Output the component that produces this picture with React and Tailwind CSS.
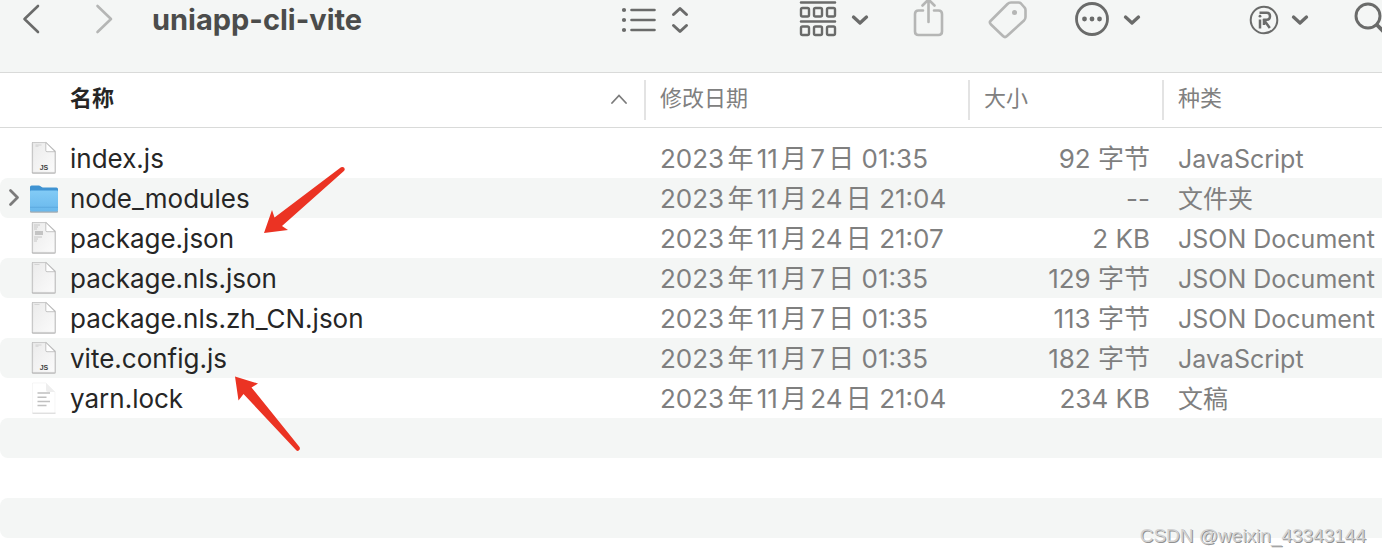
import React from 'react';

const files = [
  { name: 'index.js', icon: 'js', date: '2023年11月7日 01:35', size: '92 字节', kind: 'JavaScript' },
  { name: 'node_modules', icon: 'folder', date: '2023年11月24日 21:04', size: '--', kind: '文件夹' },
  { name: 'package.json', icon: 'preview', date: '2023年11月24日 21:07', size: '2 KB', kind: 'JSON Document' },
  { name: 'package.nls.json', icon: 'doc', date: '2023年11月7日 01:35', size: '129 字节', kind: 'JSON Document' },
  { name: 'package.nls.zh_CN.json', icon: 'doc', date: '2023年11月7日 01:35', size: '113 字节', kind: 'JSON Document' },
  { name: 'vite.config.js', icon: 'js', date: '2023年11月7日 01:35', size: '182 字节', kind: 'JavaScript' },
  { name: 'yarn.lock', icon: 'text', date: '2023年11月24日 21:04', size: '234 KB', kind: '文稿' },
];

const emptyRows = [0, 1, 2];

const FolderIcon = () => (
  <svg width="28" height="40" viewBox="0 0 28 40" aria-hidden="true" className="shrink-0 overflow-visible">
    <defs>
      <linearGradient id="folderFront" x1="0" y1="0" x2="0" y2="1">
        <stop offset="0" stopColor="#82cbf6" />
        <stop offset="1" stopColor="#69b8ec" />
      </linearGradient>
    </defs>
    <path d="M0 32.5h28v1.3q0 1-1 1H1q-1 0-1-1z" fill="#a5adb2" />
    <path d="M0 9q0-1.6 1.6-1.6h7.2q1 0 1.8.8l1 .9q.5.4 1.2.4h13.6q1.6 0 1.6 1.6V20H0z" fill="#3f93d2" />
    <path d="M0 13.4q0-1 1-1h26q1 0 1 1V32q0 1.6-1.6 1.6H1.6Q0 33.6 0 32z" fill="url(#folderFront)" />
    <path d="M0 29.3h28" stroke="#58a6dc" strokeWidth=".8" />
  </svg>
);

const DocIcon = ({ type }) => (
  <svg width="28" height="40" viewBox="0 0 28 40" aria-hidden="true" className="shrink-0 overflow-visible">
    <defs>
      <linearGradient id="page" x1="0" y1="0" x2="1" y2="1">
        <stop offset="0" stopColor="#ebebeb" />
        <stop offset="1" stopColor="#fbfbfb" />
      </linearGradient>
    </defs>
    <path d="M1.8 5q0-1 1-1H16l9.7 9v21.500q0 1.300-1.300 1.300H3.100q-1.300 0-1.300-1.300z" fill="#b8b8b8" />
    <path d="M2.6 5.2q0-.6.6-.6h12.5l9.2 8.8v20.400q0 .6-.6.600H3.200q-.6 0-.6-.6z" fill="url(#page)" stroke="#c2c2c2" strokeWidth=".5" />
    <path d="M15.8 4.5v8q0 1.2 1.2 1.2h8z" fill="#fff" stroke="#b5b5b5" strokeWidth=".8" />
    {type === 'js' && (
      <>
        <path d="M5.5 7h6M5.5 8.200h3" stroke="#c4c4c4" strokeWidth=".6" />
        <text x="14" y="31.500" textAnchor="middle" fill="#3f3f3f" className="font-['Liberation_Sans',sans-serif] text-[7px] font-bold">JS</text>
      </>
    )}
    {type === 'doc' && <path d="M4.5 6.5h5" stroke="#c4c4c4" strokeWidth=".6" />}
    {type === 'preview' && (
      <>
        <path d="M4 7h6M4 9h4M4 11h3M4 19h8M4 21h4M4 23h3" stroke="#bdbdbd" strokeWidth=".8" />
        <path d="M5 13h8v4H5z" fill="#c4c4c4" />
      </>
    )}
  </svg>
);

const TextIcon = () => (
  <svg width="28" height="40" viewBox="0 0 28 40" aria-hidden="true" className="shrink-0 overflow-visible">
    <path d="M2.5 35V5h13.5l9 9v21" fill="#fff" stroke="#f2f2f2" strokeWidth=".7" />
    <path d="M16 5v7q0 2 2 2h7z" fill="#eeeeee" />
    <path d="M2.5 35.2h23" stroke="#c6c6c6" strokeWidth=".8" />
    <path d="M7.5 15h12.5M7.5 19.2h9M7.5 23.4h12.5M7.5 27.5h9" stroke="#c0c0c0" strokeWidth="1.5" />
  </svg>
);

const FileIcon = ({ type }) => {
  if (type === 'folder') return <FolderIcon />;
  if (type === 'text') return <TextIcon />;
  return <DocIcon type={type} />;
};

const ToolButton = ({ label, className = '', width, children }) => (
  <button type="button" aria-label={label} className={`shrink-0 ${className}`}>
    <svg
      width={width}
      height="40"
      viewBox={`0 0 ${width} 40`}
      fill="none"
      stroke="currentColor"
      strokeWidth="2.6"
      strokeLinecap="round"
      strokeLinejoin="round"
    >
      {children}
    </svg>
  </button>
);

const Toolbar = () => (
  <header className="flex items-center overflow-hidden border-b border-[#d9dad9] bg-[#f4f6f5] pb-8 pl-5 text-[#6a6b6a]">
    <ToolButton label="后退" width={22}>
      <path d="M18 6 4.5 19 18 32" />
    </ToolButton>
    <ToolButton label="前进" width={22} className="ml-[52px] text-[#b5b6b5]">
      <path d="M3.5 6 17 19 3.5 32" />
    </ToolButton>
    <h1 className="ml-9 truncate text-[29px] leading-10 font-bold text-[#4b4c4b]">uniapp-cli-vite</h1>

    <div className="ml-auto flex shrink-0 items-center">
      <ToolButton label="显示方式" width={70}>
        <path d="M11.5 10h23M11.5 20h23M11.5 30h23" />
        <path d="M4 10h.01M4 20h.01M4 30h.01" strokeWidth="4.2" />
        <path d="m53.5 14.5 6.5-6 6.5 6M53.5 25.5l6.5 6 6.5-6" strokeWidth="3" />
      </ToolButton>
      <ToolButton label="分组" width={72} className="ml-[108px]">
        <path d="M3 2.5h34M3 21.5h34" />
        <g strokeWidth="2.4">
          <rect x="3" y="8" width="8" height="8.5" rx="1.5" />
          <rect x="16" y="8" width="8" height="8.5" rx="1.5" />
          <rect x="29" y="8" width="8" height="8.5" rx="1.5" />
          <rect x="3" y="26.5" width="8" height="8.5" rx="1.5" />
          <rect x="16" y="26.5" width="8" height="8.5" rx="1.5" />
          <rect x="29" y="26.5" width="8" height="8.5" rx="1.5" />
        </g>
        <path d="m55.5 17 6.5 6 6.5-6" strokeWidth="3.3" />
      </ToolButton>
      <ToolButton label="共享" width={32} className="ml-[42px] text-[#b5b6b5]">
        <path d="M11 10.5H6.5q-3.5 0-3.5 3.5v17.5q0 3.5 3.5 3.5h20q3.5 0 3.5-3.5V14q0-3.5-3.5-3.5H22" />
        <path d="M16.5 22V0M10.500 5.500l6-6 6 6" />
      </ToolButton>
      <ToolButton label="标签" width={40} className="ml-11 text-[#b5b6b5]">
        <path d="M2.5 21 19.5 4q1.5-1.5 3.5-1.5h7.5q1.5 0 2.5 1l3.5 4q1 1 1 2.5v7q0 2-1.5 3.5L19 36q-2 2-4 0L3 24.5q-2-2-.5-3.5z" />
        <path d="M26.5 12.5h.01" strokeWidth="5" />
      </ToolButton>
      <ToolButton label="更多操作" width={68} className="ml-[46px]">
        <circle cx="18" cy="19" r="15.5" strokeWidth="2.8" />
        <path d="M10.5 19h.01M18 19h.01M25.5 19h.01" strokeWidth="4.8" />
        <path d="m51.5 17 6.5 6 6.5-6" strokeWidth="3.3" />
      </ToolButton>
      <ToolButton label="右键菜单" width={62} className="ml-[106px]">
        <circle cx="16" cy="20" r="13.3" strokeWidth="2" />
        <path d="M11.5 12.7h7.300q3.200 0 3.200 3.500t-3.200 3.500h-3l6 8.300M12 19.500V28.500M16 19v6" strokeWidth="2.5" strokeLinecap="butt" />
        <path d="M12 16.2h.01" strokeWidth="2.8" />
        <path d="m45.5 17 6.5 6 6.5-6" strokeWidth="3.3" />
      </ToolButton>
      <ToolButton label="搜索" width={28} className="ml-11">
        <circle cx="14" cy="16" r="12" strokeWidth="2.9" />
        <path d="m23 25 9 9" strokeWidth="3.8" />
      </ToolButton>
    </div>
  </header>
);

const ColumnHead = ({ children }) => (
  <th scope="col" className="border-b border-[#d9dad9] p-0 font-normal text-[#808080]">
    <div className="my-[7px] flex h-10 items-center border-l-2 border-[#e3e3e3] pb-1 pl-3.5">{children}</div>
  </th>
);

const FileTable = () => (
  <table className="w-full table-fixed border-separate border-spacing-0 text-left whitespace-nowrap">
    <colgroup>
      <col />
      <col className="w-[324px]" />
      <col className="w-[194px]" />
      <col className="w-[220px]" />
    </colgroup>
    <thead className="text-[22px]">
      <tr>
        <th scope="col" aria-sort="ascending" className="border-b border-[#d9dad9] p-0">
          <button type="button" className="flex w-full items-center justify-between pr-4 pb-1 pl-[70px] font-bold text-[#262626]">
            名称
            <svg width="18" height="12" viewBox="0 0 18 12" fill="none" stroke="#7b7b7b" strokeWidth="1.8" strokeLinecap="round" aria-hidden="true">
              <path d="m2 11 7-7.5 7 7.5" />
            </svg>
          </button>
        </th>
        <ColumnHead>修改日期</ColumnHead>
        <ColumnHead>大小</ColumnHead>
        <ColumnHead>种类</ColumnHead>
      </tr>
    </thead>
    <tbody className="text-[26px] leading-[38px] text-[#7f7f7f] [text-autospace:normal] before:block before:h-2.5 before:content-['']">
      {files.map((file) => (
        <tr key={file.name} className="h-10 even:*:bg-[#f4f6f5] *:first:rounded-l-lg">
          <td className="p-0">
            <div className="flex h-10 items-center gap-3 pl-1.5 text-[#262626]">
              <div className="flex items-center gap-2">
                {file.icon === 'folder' ? (
                  <button type="button" aria-label="展开" className="w-4">
                    <svg width="16" height="20" viewBox="0 0 16 20" fill="none" stroke="#7b7b7b" strokeWidth="2.8" strokeLinecap="round" strokeLinejoin="round">
                      <path d="m4.5 2.5 7 7-7 7" />
                    </svg>
                  </button>
                ) : (
                  <span className="w-4" />
                )}
                <FileIcon type={file.icon} />
              </div>
              <span className="truncate pt-0.5">{file.name}</span>
            </div>
          </td>
          <td className="p-0 pt-0.5 pl-4">{file.date}</td>
          <td className="p-0 pt-0.5 pr-3 text-right">{file.size}</td>
          <td className="p-0 pt-0.5 pl-4 text-[25px]">{file.kind}</td>
        </tr>
      ))}
      {emptyRows.map((row) => (
        <tr key={row} className="h-10 even:*:bg-[#f4f6f5] *:first:rounded-l-lg">
          <td colSpan={4} className="p-0" />
        </tr>
      ))}
    </tbody>
  </table>
);

// red pointers drawn over the list
const Arrows = () => (
  <svg width="380" height="460" viewBox="0 0 380 460" fill="#eb3323" aria-hidden="true" className="pointer-events-none absolute top-0 left-0">
    <path d="M264 233 272 210l2.5 7.5L341 167.3q2-1 3.2.5t0 3L282 226l6 4z" />
    <path d="M235 376.5 258 383.5l-6.500 4L299.5 447q1 2-.5 3.300t-3-.3L243.5 394l-5 6.500z" />
  </svg>
);

const App = () => {
  return (
    <main className="relative overflow-hidden bg-white pb-4 font-[Inter,'Noto_Sans_CJK_SC',sans-serif]">
      <Toolbar />
      <FileTable />
      <Arrows />
      <p className="absolute right-4 bottom-1 font-['Liberation_Sans',sans-serif] text-[19px] leading-7 text-[#d2d2d2] [text-shadow:1px_1px_0_#929292]">
        CSDN @weixin_43343144
      </p>
    </main>
  );
};

export default App;
